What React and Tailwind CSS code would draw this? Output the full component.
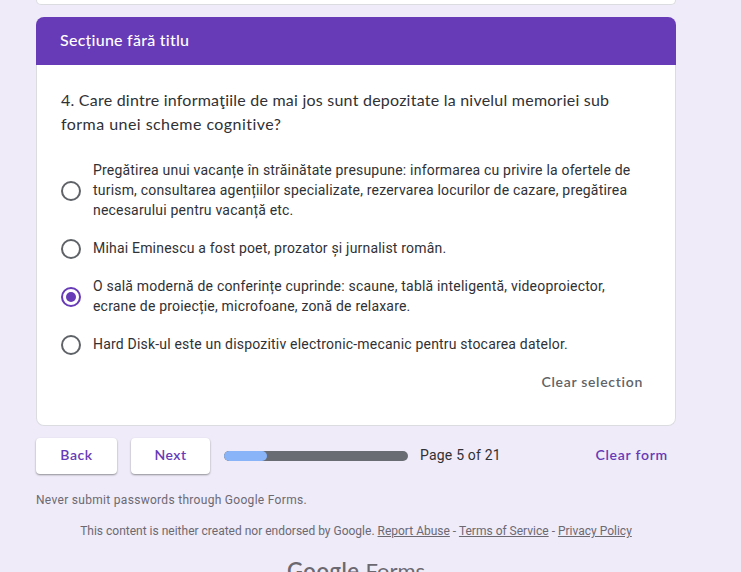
const OPTIONS = [
  {
    lines: [
      'Pregătirea unui vacanțe în străinătate presupune: informarea cu privire la ofertele de',
      'turism, consultarea agențiilor specializate, rezervarea locurilor de cazare, pregătirea',
      'necesarului pentru vacanță etc.',
    ],
  },
  { lines: ['Mihai Eminescu a fost poet, prozator și jurnalist român.'] },
  {
    checked: true,
    lines: [
      'O sală modernă de conferințe cuprinde: scaune, tablă inteligentă, videoproiector,',
      'ecrane de proiecție, microfoane, zonă de relaxare.',
    ],
  },
  { lines: ['Hard Disk-ul este un dispozitiv electronic-mecanic pentru stocarea datelor.'] },
];

function Radio({ checked }) {
  return (
    <span
      className={`flex size-5 shrink-0 translate-y-px items-center justify-center rounded-full border-2 ${
        checked ? 'border-[#673ab7]' : 'border-[#5f6368]'
      }`}
    >
      {checked && <span className="size-2.5 rounded-full bg-[#673ab7]" />}
    </span>
  );
}

function Option({ lines, checked }) {
  return (
    <div className="flex items-center gap-3">
      <Radio checked={checked} />
      <div className="text-[14px] leading-5 tracking-[0.195px] whitespace-nowrap text-[#303135]">
        {lines.map((text) => (
          <div key={text}>{text}</div>
        ))}
      </div>
    </div>
  );
}

const raised = 'h-9 rounded bg-white pb-1 shadow-[0_1px_2px_rgba(0,0,0,0.4)]';
const brand = "font-['Lato',sans-serif]";

export default function App() {
  return (
    <div className="h-[572px] w-[741px] overflow-hidden bg-[#efebf8] pl-9 font-['Roboto',sans-serif]">
      <div className="w-[640px]">
        <div className="h-[5px] rounded-b-lg border border-t-0 border-[#dadce0] bg-white" />

        <section className="mt-3">
          <h2 className={`flex h-12 items-center rounded-t-lg bg-[#673ab7] pb-0.5 pl-6 text-[16px] text-white ${brand}`}>
            <span className="font-medium tracking-[0.25px]">Secțiune fără titlu</span>
          </h2>
          <div className="h-[361px] rounded-b-lg border border-t-0 border-[#dadce0] bg-white px-6 pt-[23px]">
            <div className={`text-[16px] leading-6 whitespace-nowrap text-[#303135] ${brand}`}>
              <div className="tracking-[0.23px]">4. Care dintre informaţiile de mai jos sunt depozitate la nivelul memoriei sub</div>
              <div className="tracking-[0.45px]">forma unei scheme cognitive?</div>
            </div>
            <div className="mt-6 flex flex-col gap-[18px]">
              {OPTIONS.map((option) => (
                <Option key={option.lines[0]} {...option} />
              ))}
            </div>
            <div className={`mt-[18px] flex justify-end pr-2 text-[14px] leading-5 font-semibold text-[#5f6368] ${brand}`}>
              <button className="tracking-[0.7px]">Clear selection</button>
            </div>
          </div>
        </section>

        <div className="mt-3 flex h-9 items-center">
          <button className={`w-[81px] text-[14px] font-semibold tracking-[0.6px] text-[#673ab7] ${raised} ${brand}`}>
            Back
          </button>
          <button className={`ml-3.5 w-[79px] text-[14px] font-semibold tracking-[0.5px] text-[#673ab7] ${raised} ${brand}`}>
            Next
          </button>
          <div className="ml-3.5 h-2.5 w-[184px] overflow-hidden rounded-full bg-[#696d73]">
            <div className="h-full w-[43px] rounded-full bg-[#8ab4f8]" />
          </div>
          <div className="ml-3 pb-0.5 text-[14px] tracking-[0.2px] text-[#303135]">Page 5 of 21</div>
          <button className={`mr-2 ml-auto pb-1 text-[14px] font-semibold tracking-[0.75px] text-[#673ab7] ${brand}`}>
            Clear form
          </button>
        </div>

        <p className="mt-[18px] text-[12px] leading-4 tracking-[0.3px] text-[#6c6973]">
          Never submit passwords through Google Forms.
        </p>
        <p className="mt-[15px] text-center text-[12px] leading-4 whitespace-nowrap text-[#6c6973]">
          This content is neither created nor endorsed by Google. <a className="underline">Report Abuse</a> -{' '}
          <a className="underline">Terms of Service</a> - <a className="underline">Privacy Policy</a>
        </p>
        <div className={`mt-4 flex justify-center gap-1.5 text-[22px] leading-8 text-[#6b6870] ${brand}`}>
          <span className="font-semibold tracking-[0.5px]">Google</span>
          <span>Forms</span>
        </div>
      </div>
    </div>
  );
}
